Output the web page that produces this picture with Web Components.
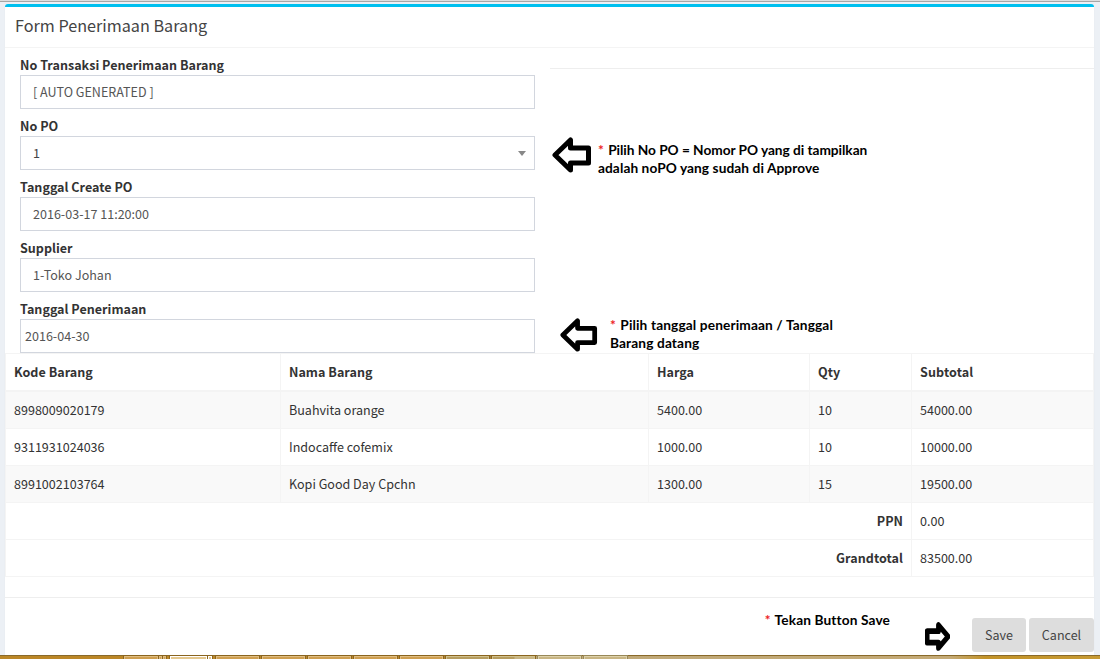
<!DOCTYPE html>
<html lang="id">
<head>
<meta charset="utf-8">
<title>Form Penerimaan Barang</title>
<style>
html,body{margin:0;height:659px;overflow:hidden}
body{font-family:"Noto Sans CJK SC","Noto Sans",sans-serif;font-size:12.56px;line-height:20px;color:#333;background:#ecf0f5}
</style>
</head>
<body>
<receipt-page></receipt-page>
<script>
const define = (name, html) => customElements.define(name, class extends HTMLElement {
  constructor() {
    super();
    const t = document.createElement('template');
    t.innerHTML = html;
    this.attachShadow({ mode: 'open' }).append(t.content.cloneNode(true));
  }
});

define('form-field', `<style>
:host{display:block;height:61px}
.label{font-weight:700;height:20px;line-height:20px;letter-spacing:.01px}
.box{box-sizing:border-box;height:34px;border:1px solid #d2d6de;background:#fff;color:#555;padding:0 12px;display:flex;align-items:center;justify-content:space-between}
:host([tight]) .box{padding:0 4px}
.caret{display:none;width:0;height:0;border:4px solid transparent;border-top:5px solid #888;border-bottom:0;margin-right:-4px}
:host([select]) .caret{display:block}
:host([select]) .box{color:#444}
</style><div class="label"><slot name="label"></slot></div><div class="box"><slot></slot><i class="caret"></i></div>`);

define('block-arrow', `<style>
:host{display:block;flex:none}
svg{display:block;width:100%;height:100%}
path{stroke-width:var(--stroke,5)}
</style><svg viewBox="0 0 40 38" preserveAspectRatio="none"><path d="M3 19 18.5 4V12H36.5V27H18.5V34Z" fill="#fff" stroke="#000" stroke-linejoin="round"/></svg>`);

define('hint-note', `<style>
:host{display:block;font:700 13.7px/18px Lato,sans-serif;color:#000;white-space:nowrap}
b{color:#ed1c24;font-weight:700;letter-spacing:1px}
</style><b>*</b> <slot></slot>`);

define('flat-button', `<style>
:host{display:flex;align-items:center;justify-content:center;height:34px;border-radius:3px;background:#ddd;color:#444}
</style><slot></slot>`);

define('goods-table', `<style>
:host{display:block}
.row{display:grid;grid-template-columns:275px 368px 161px 102px 183px;height:36px;border-bottom:1px solid #f4f4f4}
.row.head{border-top:1px solid #f4f4f4;border-bottom-width:2px;font-weight:700}
.row.odd{background:#f9f9f9}
.row span{box-sizing:border-box;border-left:1px solid #f4f4f4;padding:0 8px;line-height:36px}
.row span:last-child{border-right:1px solid #f4f4f4}
.row .sum{grid-column:span 4;text-align:right;font-weight:700;letter-spacing:.04px}
.row.head span{letter-spacing:.03px}
.row.head span:last-child{letter-spacing:.12px}
</style>
<div class="row head"><span>Kode Barang</span><span>Nama Barang</span><span>Harga</span><span>Qty</span><span>Subtotal</span></div>
<div class="row odd"><span>8998009020179</span><span>Buahvita orange</span><span>5400.00</span><span>10</span><span>54000.00</span></div>
<div class="row"><span>9311931024036</span><span>Indocaffe cofemix</span><span>1000.00</span><span>10</span><span>10000.00</span></div>
<div class="row odd"><span>8991002103764</span><span>Kopi Good Day Cpchn</span><span>1300.00</span><span>15</span><span>19500.00</span></div>
<div class="row"><span class="sum">PPN</span><span>0.00</span></div>
<div class="row"><span class="sum">Grandtotal</span><span>83500.00</span></div>`);

define('task-strip', `<style>
:host{display:flex;height:4px;padding-left:124px;gap:3px;box-sizing:border-box;border-top:1px solid #8a6a2a;background:linear-gradient(90deg,#bc8726 0,#bc8726 410px,#a08040 500px,#bea878 520px,#c4aa76 950px,#c39328 985px,#c79a33 1100px)}
i{box-sizing:border-box;flex:none;width:43px;height:3px;border:1px solid #dfbd82;border-bottom:0;background:#cf9f50;box-shadow:0 0 0 1px #8b651f}
i.on{border-color:#fff;background:#e5c88e}
i.s{width:3px;margin-left:-2px}
i.on.s{width:4px}
i.o{background:#b69d5f;border-color:#cfc08c}
i.p{border-color:#ddd1aa;background:#c8b583;box-shadow:0 0 0 1px #988858}
</style><i style="width:34px"></i><i class="s"></i><i class="s" style="margin-right:1px"></i><i class="on" style="width:37px"></i><i class="on s" style="margin-right:1px"></i><i></i><i></i><i></i><i></i><i></i><i class="o"></i><i class="o" style="background:linear-gradient(90deg,#b69d5f 21px,#c8b583 22px)"></i><i class="p"></i><i class="p"></i>`);

define('receipt-page', `<style>
:host{display:flex;flex-direction:column;height:659px}
.edge{height:1px;background:#dedede;border-bottom:1px solid #a6a6a6;margin-bottom:2px}
.panel{box-sizing:border-box;width:1089px;height:651px;margin-left:5px;background:#fff;border-top:3px solid #00c0ef;border-radius:3px 3px 0 0;box-shadow:0 1px 1px rgba(0,0,0,.1);display:flex;flex-direction:column}
.title{box-sizing:border-box;height:41px;padding:8px 10px 0;font-size:16.2px;line-height:20px;color:#444;border-bottom:1px solid #f4f4f4}
.body{display:flex;height:305px}
.left{width:515px;margin:7px 15px 0}
.right{flex:1;margin-top:20px;border-top:1px solid #eee}
.hint{display:flex}
block-arrow{width:40px;height:38px}
.foot{box-sizing:border-box;margin-top:20px;height:58px;border-top:1px solid #eee;display:flex;justify-content:flex-end;gap:3px;padding-top:20px}
.foot hint-note{margin:-7px 32px 0 0;letter-spacing:.12px}
</style>
<div class="edge"></div>
<div class="panel">
<div class="title">Form Penerimaan Barang</div>
<div class="body">
<div class="left">
<form-field><span slot="label">No Transaksi Penerimaan Barang</span>[ AUTO GENERATED ]</form-field>
<form-field select><span slot="label">No PO</span>1</form-field>
<form-field><span slot="label">Tanggal Create PO</span>2016-03-17 11:20:00</form-field>
<form-field><span slot="label">Supplier</span>1-Toko Johan</form-field>
<form-field tight><span slot="label">Tanggal Penerimaan</span>2016-04-30</form-field>
</div>
<div class="right">
<div class="hint" style="margin:67px 0 0 2px"><block-arrow></block-arrow><hint-note style="margin:5px 0 0 6px"><span style="letter-spacing:-.04px">Pilih No PO = Nomor PO yang di tampilkan</span><br><span style="letter-spacing:.08px">adalah noPO yang sudah di Approve</span></hint-note></div>
<div class="hint" style="margin:140px 0 0 10px"><block-arrow style="width:38px;height:36px"></block-arrow><hint-note style="margin:-1px 0 0 12px;letter-spacing:.13px">Pilih tanggal penerimaan / Tanggal<br>Barang datang</hint-note></div>
</div>
</div>
<goods-table></goods-table>
<div class="foot"><hint-note>Tekan Button Save</hint-note><block-arrow style="--stroke:7.5;width:25px;height:29px;margin:4px 19px 0 0;transform:scaleX(-1)"></block-arrow><flat-button style="width:54px">Save</flat-button><flat-button style="width:65px">Cancel</flat-button></div>
</div>
<task-strip></task-strip>`);
</script>
</body>
</html>
